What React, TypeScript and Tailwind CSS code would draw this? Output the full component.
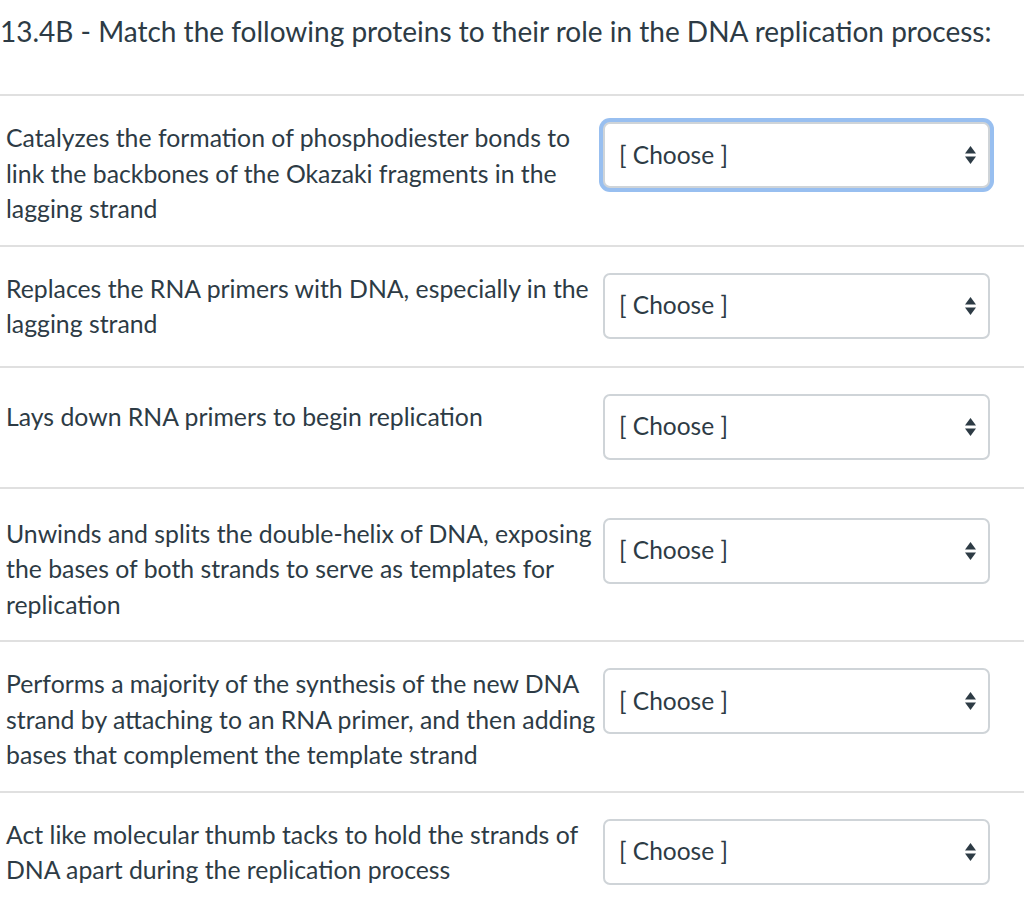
import React from "react";

const rows: { text: string; focus?: boolean; single?: boolean; extra?: boolean }[] = [
  {
    text: "Catalyzes the formation of phosphodiester bonds to link the backbones of the Okazaki fragments in the lagging strand",
    focus: true,
  },
  { text: "Replaces the RNA primers with DNA, especially in the lagging strand" },
  { text: "Lays down RNA primers to begin replication", single: true },
  {
    text: "Unwinds and splits the double-helix of DNA, exposing the bases of both strands to serve as templates for replication",
    extra: true,
  },
  {
    text: "Performs a majority of the synthesis of the new DNA strand by attaching to an RNA primer, and then adding bases that complement the template strand",
  },
  { text: "Act like molecular thumb tacks to hold the strands of DNA apart during the replication process" },
];

function Arrows() {
  return (
    <svg width="11" height="18" viewBox="0 0 11 18" className="shrink-0">
      <path d="M5.5 0 L11 7.5 L0 7.5 Z" fill="#2d3b45" />
      <path d="M0 10.5 L11 10.5 L5.5 18 Z" fill="#2d3b45" />
    </svg>
  );
}

function Select({ focus }: { focus?: boolean }) {
  return (
    <div
      className={
        "w-[387px] h-[66px] rounded-[7px] border-2 border-[#cfd4d8] bg-white flex items-center justify-between pl-[14px] pr-[12px] " +
        (focus ? "shadow-[0_0_0_4px_#98bff0]" : "")
      }
    >
      <span className="text-[24.5px] text-[#2d3b45] leading-none">[ Choose ]</span>
      <Arrows />
    </div>
  );
}

export default function App() {
  return (
    <div
      className="w-[1024px] min-h-[924px] bg-white text-[#2d3b45]"
      style={{ fontFamily: "Lato, 'Open Sans', sans-serif" }}
    >
      <div className="pt-[15px] pb-[47px] border-b-2 border-[#e0e0e0] pl-[0px]">
        <h1 className="text-[28px] leading-[32px] font-normal whitespace-nowrap">
          13.4B - Match the following proteins to their role in the DNA replication process:
        </h1>
      </div>
      {rows.map((r, i) => (
        <div
          key={i}
          className={
            "flex items-start pb-[18px] " +
            (r.extra ? "pt-[27px] " : "pt-[24px] ") +
            (i < rows.length - 1 ? "border-b-2 border-[#e0e0e0]" : "")
          }
        >
          <div
            className={
              "w-[597px] shrink-0 pl-[6px] text-[24.8px] leading-[35.5px] " + (r.single ? "pt-[7px]" : "")
            }
          >
            {r.text}
          </div>
          <div className="ml-[6px] mt-[2px] mb-[9px]">
            <Select focus={r.focus} />
          </div>
        </div>
      ))}
    </div>
  );
}
